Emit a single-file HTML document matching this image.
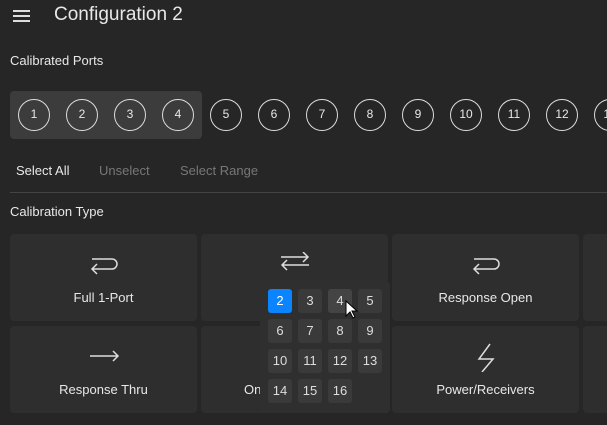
<!DOCTYPE html><html><head><style>
*{margin:0;padding:0;box-sizing:border-box}
body{width:607px;height:425px;background:#262626;font-family:"Liberation Sans",sans-serif;color:#e8e8e8;position:relative;overflow:hidden}
.a{position:absolute}
.t{font-size:13px}
.c{position:absolute;width:32px;height:32px;border:1.5px solid #ddd;border-radius:50%;font-size:12px;line-height:29px;text-align:center;top:99px}
.card{position:absolute;background:#2e2e2e;border-radius:4px;width:187px;height:87px}
.lb{position:absolute;width:100%;text-align:center;font-size:13px;top:56px}
.ic{position:absolute;left:50%;top:18px;margin-left:-16px}
.g{position:absolute;width:24px;height:24px;border-radius:3px;background:#3a3a3a;font-size:13px;line-height:24px;text-align:center;color:#ddd}
</style></head><body>
<div class="a" style="left:13px;top:10px;width:17px;height:2px;background:#ddd"></div>
<div class="a" style="left:13px;top:15px;width:17px;height:2px;background:#ddd"></div>
<div class="a" style="left:13px;top:20px;width:17px;height:2px;background:#ddd"></div>
<div class="a" style="left:54px;top:4px;font-size:19px">Configuration 2</div>
<div class="a t" style="left:10px;top:53px">Calibrated Ports</div>
<div class="a" style="left:10px;top:91px;width:192px;height:48px;background:#3c3c3c;border-radius:4px"></div>
<div class="c" style="left:18px">1</div><div class="c" style="left:66px">2</div><div class="c" style="left:114px">3</div><div class="c" style="left:162px">4</div><div class="c" style="left:210px">5</div><div class="c" style="left:258px">6</div><div class="c" style="left:306px">7</div><div class="c" style="left:354px">8</div><div class="c" style="left:402px">9</div><div class="c" style="left:450px">10</div><div class="c" style="left:498px">11</div><div class="c" style="left:546px">12</div><div class="c" style="left:594px">13</div>
<div class="a t" style="left:16px;top:163px">Select All</div>
<div class="a t" style="left:99px;top:163px;color:#777">Unselect</div>
<div class="a t" style="left:180px;top:163px;color:#777">Select Range</div>
<div class="a" style="left:10px;top:192px;width:597px;height:1px;background:#444"></div>
<div class="a t" style="left:10px;top:204px">Calibration Type</div>
<div class="card" style="left:10px;top:234px"><svg class="ic" width="32" height="24"><path d="M4 7h20a5 5 0 0 1 0 10H4M9 12l-5 5 5 5" fill="none" stroke="#ddd" stroke-width="1.5"/></svg><div class="lb">Full 1-Port</div></div>
<div class="card" style="left:201px;top:234px"><svg class="ic" width="32" height="24"><path d="M2 5h27M24 0l5 5-5 5M30 13H3M8 8l-5 5 5 5" fill="none" stroke="#ddd" stroke-width="1.5"/></svg></div>
<div class="card" style="left:392px;top:234px"><svg class="ic" width="32" height="24"><path d="M4 7h20a5 5 0 0 1 0 10H4M9 12l-5 5 5 5" fill="none" stroke="#ddd" stroke-width="1.5"/></svg><div class="lb">Response Open</div></div>
<div class="card" style="left:583px;top:234px"></div>
<div class="card" style="left:10px;top:326px"><svg class="ic" width="32" height="24"><path d="M2 12h28M25 7l5 5-5 5" fill="none" stroke="#ddd" stroke-width="1.5"/></svg><div class="lb">Response Thru</div></div>
<div class="card" style="left:201px;top:326px"><div class="a t" style="left:43px;top:56px">On</div></div>
<div class="card" style="left:392px;top:326px"><svg class="ic" width="32" height="30" style="top:16px"><path d="M20 2 9 17h14L12 30" fill="none" stroke="#ddd" stroke-width="1.5"/></svg><div class="lb">Power/Receivers</div></div>
<div class="card" style="left:583px;top:326px"></div>
<div class="a" style="left:260px;top:281px;width:130px;height:132px;background:#2f2f2f;border-radius:4px"></div>
<div class="g" style="left:268px;top:289px;background:#0a84ff;color:#fff">2</div><div class="g" style="left:298px;top:289px">3</div><div class="g" style="left:328px;top:289px;background:#444">4</div><div class="g" style="left:358px;top:289px">5</div>
<div class="g" style="left:268px;top:319px">6</div><div class="g" style="left:298px;top:319px">7</div><div class="g" style="left:328px;top:319px">8</div><div class="g" style="left:358px;top:319px">9</div>
<div class="g" style="left:268px;top:349px">10</div><div class="g" style="left:298px;top:349px">11</div><div class="g" style="left:328px;top:349px">12</div><div class="g" style="left:358px;top:349px">13</div>
<div class="g" style="left:268px;top:379px">14</div><div class="g" style="left:298px;top:379px">15</div><div class="g" style="left:328px;top:379px">16</div>
<svg class="a" style="left:345px;top:300px" width="14" height="20"><path d="M1 1v15l4-4 3 6 2-1-3-6h5z" fill="#fff" stroke="#000" stroke-width="1"/></svg>
</body></html>
